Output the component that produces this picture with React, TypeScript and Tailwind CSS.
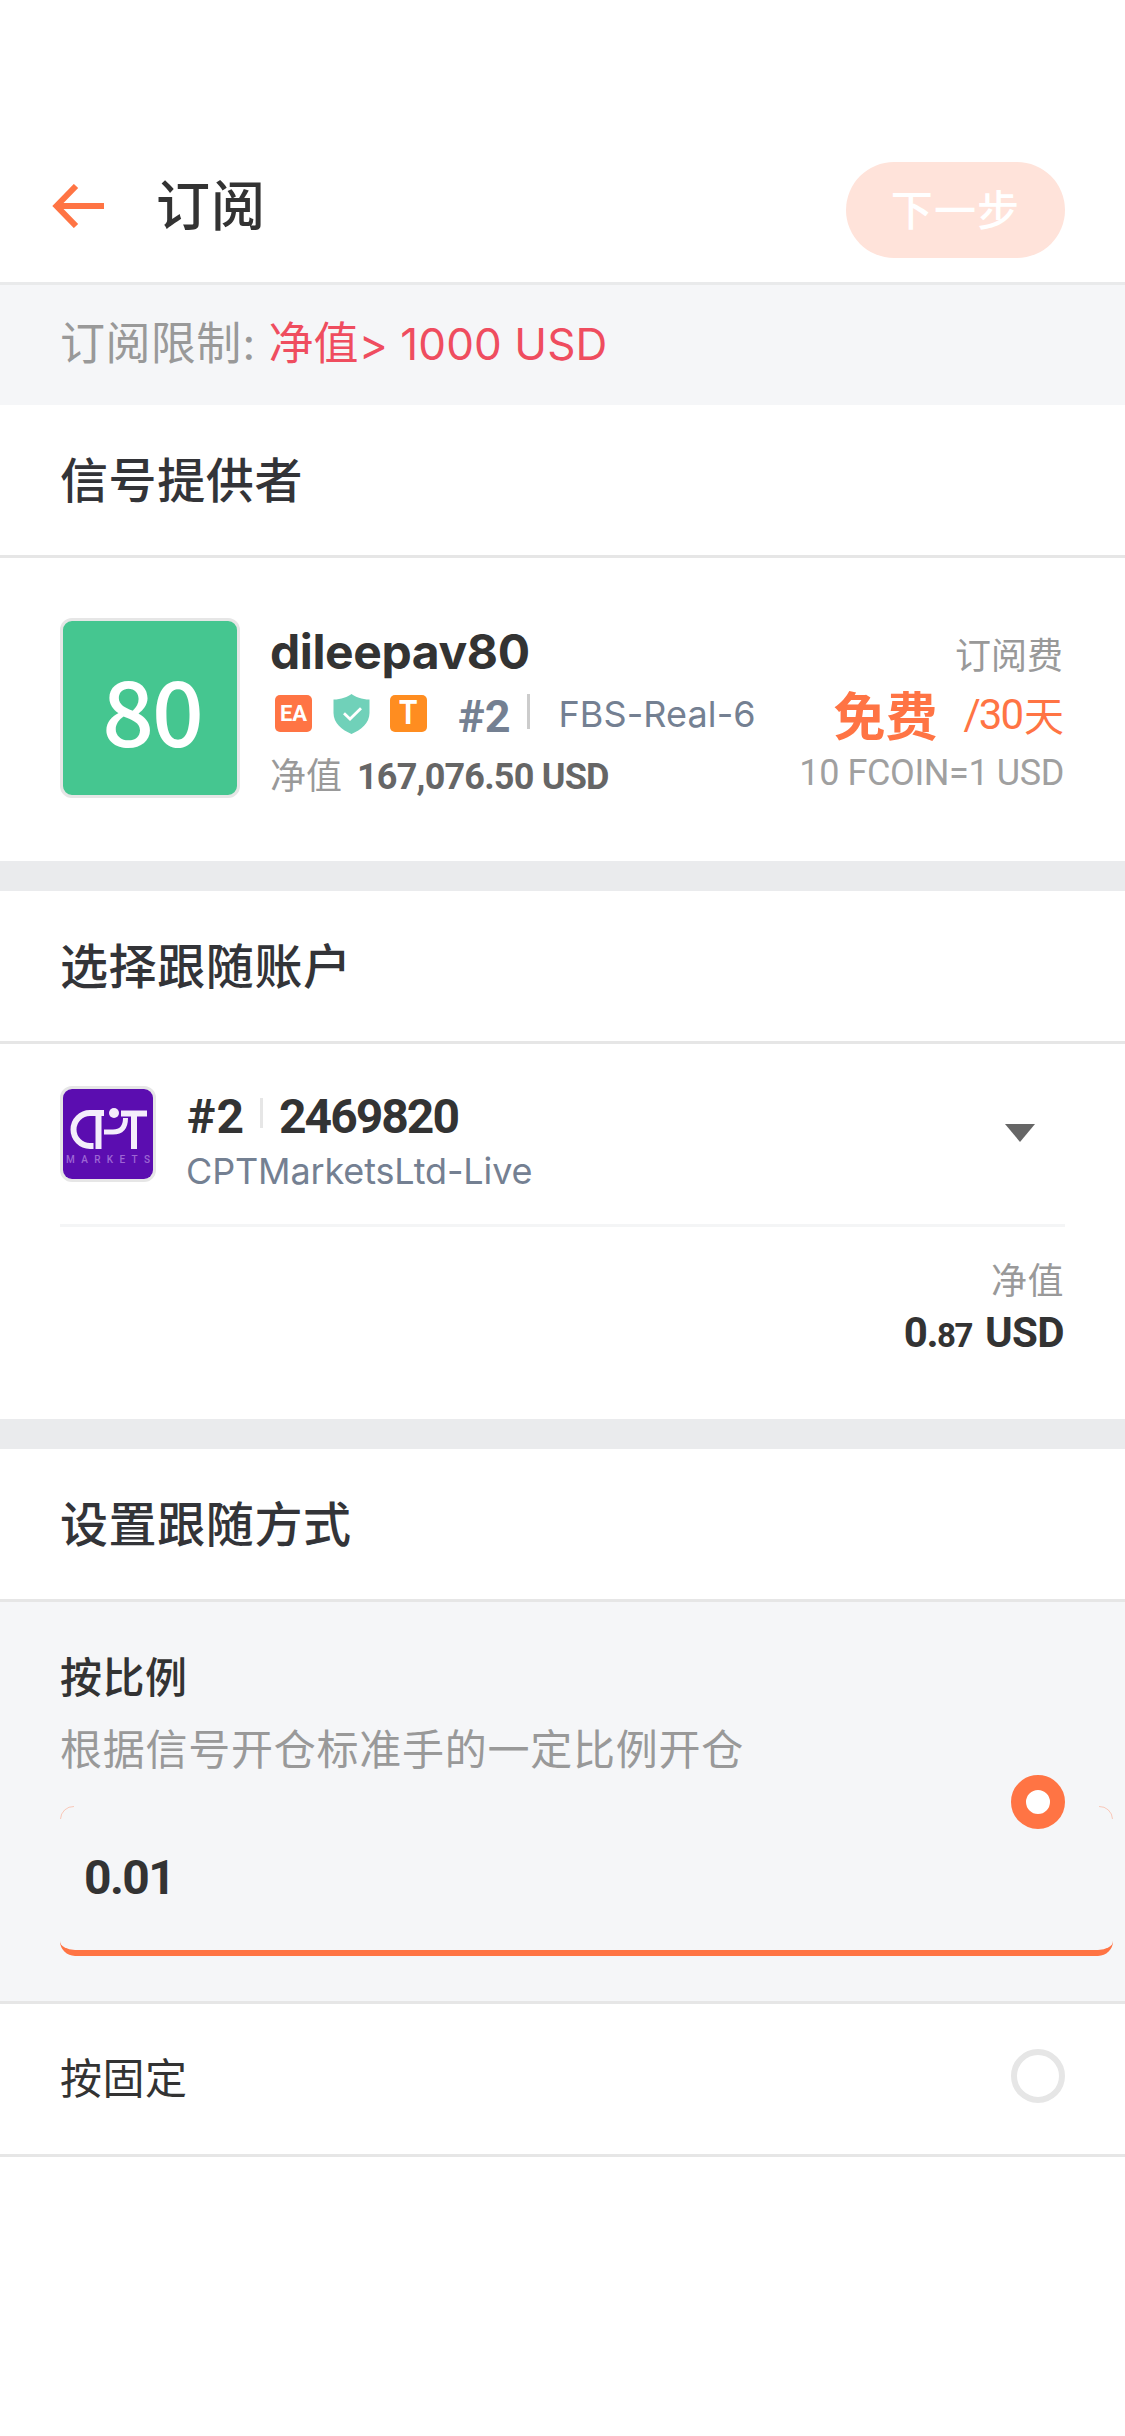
import type { ReactNode } from 'react'

const provider = {
  name: 'dileepav80',
  initials: '80',
  rank: '#2',
  server: 'FBS-Real-6',
  equity: '167,076.50 USD',
}

const account = {
  rank: '#2',
  number: '2469820',
  server: 'CPTMarketsLtd-Live',
}

function SectionTitle({ children }: { children: ReactNode }) {
  return (
    <h2 className="flex h-[153px] items-center border-b-[3px] border-[#e6e6e6] bg-white px-[60px] pb-[6px] font-['Noto_Sans_CJK_SC',sans-serif] text-5xl font-medium tracking-[0.6px] text-[#333438]">
      {children}
    </h2>
  )
}

function Radio({ checked = false }: { checked?: boolean }) {
  return (
    <span
      className={
        checked
          ? 'z-10 size-[54px] shrink-0 rounded-full border-[15px] border-[#ff7444] bg-white'
          : 'size-[54px] shrink-0 rounded-full border-[6px] border-[#e6e6e6] bg-white'
      }
    />
  )
}

function ShieldIcon() {
  return (
    <svg className="ml-[21px] h-10 w-[37px]" viewBox="0 0 37 40" fill="none">
      <path
        d="M18.5 0C22 3 29 5.3 36.5 5.6V19C36.5 29 28 36 18.5 40C9 36 0.5 29 0.5 19V5.6C8 5.3 15 3 18.5 0Z"
        fill="#70d1b9"
      />
      <path d="M11 19.3L17 25L28 14.3" stroke="#fff" strokeWidth="2.8" />
    </svg>
  )
}

function BrokerLogo() {
  return (
    <svg className="size-[90px]" viewBox="0 0 90 90" fill="none">
      <rect width="90" height="90" fill="#5b0db0" />
      <g stroke="#f4edfb" strokeWidth="6">
        <path d="M41 24H27A16.5 16.5 0 0 0 27 57H30.5" />
        <path d="M35.5 24V60" />
        <path d="M62.5 29C62.5 39 58 43 50 43H41" strokeWidth="5" />
        <path d="M58 24.5H84" />
        <path d="M71 24.5V60" />
      </g>
      <circle cx="51" cy="24" r="5" fill="#f4edfb" />
      <text x="3" y="73.5" textLength="84" fontSize="10" fontWeight="500" fontFamily="Roboto, sans-serif" fill="#9d66d4">
        MARKETS
      </text>
    </svg>
  )
}

function CornerArc({ className }: { className: string }) {
  return (
    <svg className={className} viewBox="0 0 15 15" fill="none">
      <path d="M0.5 13A13 13 0 0 1 14 0.5" stroke="#ff7444" strokeOpacity="0.5" strokeWidth="0.7" />
    </svg>
  )
}

function App() {
  return (
    <div className="min-h-[2436px] w-[1125px] overflow-hidden bg-white font-[Inter,'Noto_Sans_CJK_SC',sans-serif] text-[#333]">
      {/* Header */}
      <header className="border-b-[3px] border-[#e9eaeb] pt-[129px]">
        <div className="flex h-[153px] items-center pr-[60px] pl-[52px]">
          <svg className="h-11 w-[52px]" viewBox="0 0 52 44" fill="none" stroke="#ff7444" strokeWidth="6">
            <path d="M24 2L4.5 22L24 42M4 22H52" />
          </svg>
          <h1 className="mb-[6px] ml-[52px] font-['Noto_Sans_CJK_SC',sans-serif] text-[54px] leading-none font-medium tracking-[1px]">
            订阅
          </h1>
          <button className="mt-[9px] ml-auto flex h-24 w-[219px] items-center justify-center rounded-full bg-[#ffe3da] pb-[4px] font-['Noto_Sans_CJK_SC',sans-serif] text-[42px] leading-none font-medium tracking-[1.2px] text-white">
            下一步
          </button>
        </div>
      </header>

      {/* Subscription limit */}
      <div className="flex h-[120px] items-center bg-[#f5f6f8] px-[60px] pb-[6px]">
        <p className="flex items-baseline text-[44px] whitespace-pre">
          <span className="font-['Noto_Sans_CJK_SC',sans-serif] text-[45px] tracking-[0.4px] text-[#999]">订阅限制</span>
          <span className="w-[27px] pl-px text-[#999]">:</span>
          <span className="font-['Noto_Sans_CJK_SC',sans-serif] text-[45px] text-[#ef4d5f]">净值</span>
          <span className="tracking-[0.1px] text-[#ef4d5f]">&gt; 1000 USD</span>
        </p>
      </div>

      {/* Signal provider */}
      <SectionTitle>信号提供者</SectionTitle>
      <section className="flex h-[303px] items-start px-[60px] pt-[60px]">
        <div className="flex size-[180px] items-center justify-center rounded-xl border-[3px] border-[#e6e6e6] bg-[#45c690] pb-[2px] pl-[4px] font-['Noto_Sans_CJK_SC',sans-serif] text-[91px] leading-none font-medium tracking-[-2px] text-white">
          {provider.initials}
        </div>
        <div className="ml-[30px] flex flex-col pt-[4px]">
          <div className="text-5xl leading-[60px] font-[650] tracking-[-0.4px]">{provider.name}</div>
          <div className="flex h-[63px] items-center pl-[5px]">
            <span className="flex size-[37px] items-center justify-center rounded-[5px] bg-[#ff7444] font-[Roboto,sans-serif] text-[22px] font-bold text-white">
              EA
            </span>
            <ShieldIcon />
            <span className="ml-5 flex size-[37px] items-center justify-center rounded-[5px] bg-[#ff8d20] text-white">
              <span className="mb-[3px] scale-x-90 font-[Roboto,sans-serif] text-[33px] leading-none font-bold">T</span>
            </span>
            <span className="mt-[6px] ml-[31px] font-[Roboto,sans-serif] text-[45px] leading-none font-bold text-[#748092]">
              {provider.rank}
            </span>
            <span className="mb-[5px] ml-[17px] h-[35px] w-[3px] bg-[#ccc]" />
            <span className="ml-[28px] text-4xl leading-none tracking-[0.1px] text-[#748092]">{provider.server}</span>
          </div>
          <div className="flex h-[54px] items-baseline pt-px leading-[54px]">
            <span className="font-['Noto_Sans_CJK_SC',sans-serif] text-4xl leading-[54px] text-[#999]">净值</span>
            <span className="ml-[15px] font-[Roboto,sans-serif] text-4xl leading-[54px] font-bold tracking-[-0.8px] text-[#666]">
              {provider.equity}
            </span>
          </div>
        </div>
        <div className="ml-auto flex flex-col items-end pt-[11px] pr-px">
          <span className="pr-px font-['Noto_Sans_CJK_SC',sans-serif] text-4xl leading-[48px] text-[#999]">订阅费</span>
          <div className="flex h-[72px] items-center pt-[2px] text-[#ff7444]">
            <span className="font-['Noto_Sans_CJK_SC',sans-serif] text-[52px] leading-[72px] font-bold">免费</span>
            <span className="ml-[26px] pt-[2px] font-[Roboto,sans-serif] text-[42px] leading-[72px] tracking-[-2px]">
              /30
            </span>
            <span className="ml-[2px] font-['Noto_Sans_CJK_SC',sans-serif] text-[40px] leading-[72px]">天</span>
          </div>
          <span className="font-[Roboto,sans-serif] text-4xl leading-[48px] tracking-[-0.4px] text-[#a0a0a0]">
            10 FCOIN=1 USD
          </span>
        </div>
      </section>

      <div className="h-[30px] bg-[#eaebed]" />

      {/* Follower account */}
      <SectionTitle>选择跟随账户</SectionTitle>
      <section className="h-[375px] px-[60px]">
        <div className="flex h-[183px] items-start border-b-[3px] border-[#f4f5f6] pt-[42px]">
          <div className="size-24 overflow-hidden rounded-xl border-[3px] border-[#e6e6e6]">
            <BrokerLogo />
          </div>
          <div className="ml-[30px] flex flex-col pt-px">
            <div className="flex h-[60px] items-center pl-px font-[Roboto,sans-serif] text-5xl leading-none font-bold">
              <span className="tracking-[1px]">{account.rank}</span>
              <span className="mb-[9px] ml-[15px] h-[30px] w-[3px] bg-[#e6e6e6]" />
              <span className="ml-4 tracking-[-1.96px]">{account.number}</span>
            </div>
            <span className="text-4xl leading-[48px] tracking-[-0.14px] text-[#748092]">{account.server}</span>
          </div>
          <svg className="mt-[38px] mr-[30px] ml-auto h-[18px] w-[30px]" viewBox="0 0 30 18">
            <path d="M0 0H30L15 18Z" fill="#666" />
          </svg>
        </div>
        <div className="flex flex-col items-end pt-[27px] pr-px">
          <span className="font-['Noto_Sans_CJK_SC',sans-serif] text-4xl leading-[48px] tracking-[0.5px] text-[#999]">净值</span>
          <span className="flex items-baseline pt-px font-[Roboto,sans-serif] text-[42px] leading-[60px] font-bold">
            <span className="tracking-[-1.5px]">0.</span>
            <span className="text-[33px] tracking-[-1.5px]">87</span>
            <span className="ml-[13px] tracking-[-0.6px]">USD</span>
          </span>
        </div>
      </section>

      <div className="h-[30px] bg-[#eaebed]" />

      {/* Follow mode */}
      <SectionTitle>设置跟随方式</SectionTitle>
      <section className="flex h-[402px] items-center border-b-[3px] border-[#e6e6e6] bg-[#f5f6f8] px-[60px]">
        <div className="flex h-full w-[951px] shrink-0 flex-col pt-[43px]">
          <span className="font-['Noto_Sans_CJK_SC',sans-serif] text-[42px] leading-[60px] font-medium tracking-[0.5px]">按比例</span>
          <span className="mt-3 font-['Noto_Sans_CJK_SC',sans-serif] text-[42px] leading-[60px] tracking-[0.75px] whitespace-nowrap text-[#999]">
            根据信号开仓标准手的一定比例开仓
          </span>
          <div className="relative mt-[29px] flex h-[150px] w-[1053px] items-center rounded-[15px] border-b-[6px] border-[#ff7444] pl-[24px] font-[Roboto,sans-serif] text-5xl leading-none font-bold tracking-[-1.6px]">
            <CornerArc className="absolute top-0 left-0 size-[15px]" />
            0.01
            <CornerArc className="absolute top-0 right-0 size-[15px] -scale-x-100" />
          </div>
        </div>
        <Radio checked />
      </section>
      <section className="flex h-[153px] items-center justify-between border-b-[3px] border-[#e6e6e6] px-[60px] pb-[6px]">
        <span className="font-['Noto_Sans_CJK_SC',sans-serif] text-[42px] leading-[60px] tracking-[0.5px]">按固定</span>
        <Radio />
      </section>
    </div>
  )
}

export default App
